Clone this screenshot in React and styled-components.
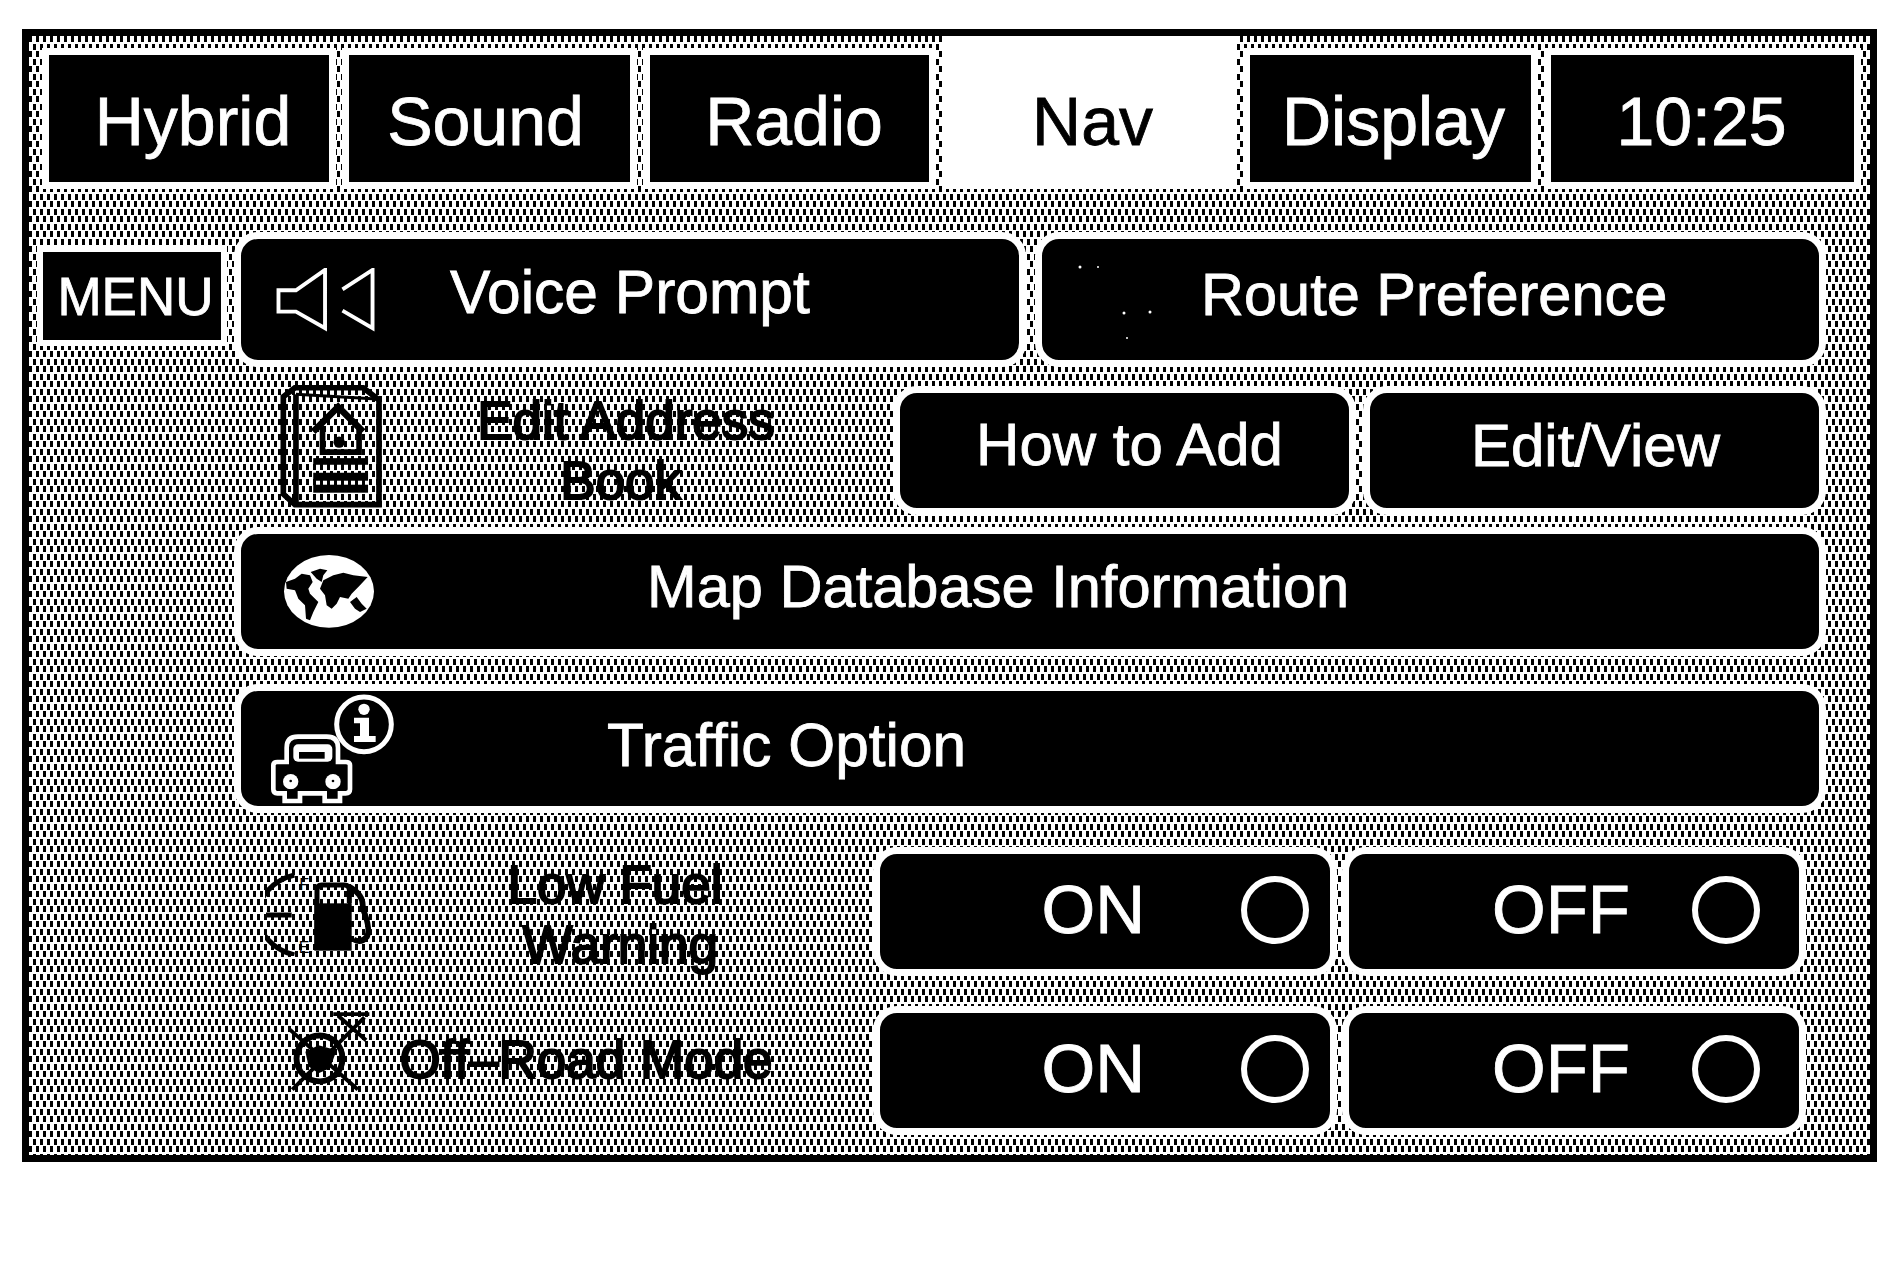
import React from 'react';
import styled, { createGlobalStyle } from 'styled-components';

const GlobalStyle = createGlobalStyle`
  html, body {
    margin: 0;
    padding: 0;
    background: #fff;
  }
  body {
    font-family: 'Liberation Sans', Arial, sans-serif;
  }
`;

const Page = styled.div`
  width: 1893px;
  height: 1272px;
  padding: 29px 0 0 22px;
  box-sizing: border-box;
  overflow: hidden;
`;

// halftone: two staggered layers of short vertical bars
const Frame = styled.div`
  width: 1855px;
  height: 1133px;
  box-sizing: border-box;
  border: 7px solid #000;
  background-color: #fff;
  background-image:
    conic-gradient(from 270deg at 3px 6px, #000 25%, transparent 0),
    conic-gradient(from 270deg at 3px 6px, #000 25%, transparent 0);
  background-size: 7px 15px;
  background-position: 0 0, 4px 8px;
`;

const TabRow = styled.div`
  display: flex;
  gap: 6px;
  padding: 12px 0 0 13px;
`;

const Tab = styled.div`
  width: ${(p) => p.$width}px;
  height: 141px;
  flex: none;
  box-sizing: border-box;
  border: 7px solid #fff;
  background: #000;
  color: #fff;
  font-size: 68px;
  -webkit-text-stroke: 0.8px currentColor;
  display: flex;
  align-items: center;
  justify-content: center;
  padding-top: 4px;
  padding-left: ${(p) => p.$nudge || 0}px;
  padding-right: ${(p) => p.$back || 0}px;
`;

const ActiveTab = styled(Tab)`
  height: 153px;
  margin-top: -12px;
  padding-top: 16px;
  background: #fff;
  color: #000;
`;

const Row = styled.div`
  display: flex;
  align-items: center;
  margin-top: ${(p) => p.$top}px;
  padding-left: ${(p) => p.$left ?? 205}px;
  width: 1797px;
  box-sizing: border-box;
  gap: ${(p) => p.$gap || 0}px;
`;

const MenuButton = styled.div`
  width: 190px;
  height: 100px;
  margin-bottom: 7px;
  padding-left: 7px;
  box-sizing: border-box;
  border: 6px solid #fff;
  background: #000;
  color: #fff;
  font-size: 53px;
  -webkit-text-stroke: 0.8px #fff;
  display: flex;
  align-items: center;
  justify-content: center;
`;

const Button = styled.div`
  width: ${(p) => (p.$width ? `${p.$width}px` : '100%')};
  height: ${(p) => p.$height || 129}px;
  flex: none;
  margin-left: ${(p) => p.$shift || 0}px;
  box-sizing: border-box;
  border: 7px solid #fff;
  border-radius: 24px;
  background: #000;
  color: #fff;
  font-size: ${(p) => p.$size || 60}px;
  -webkit-text-stroke: 0.8px #fff;
  display: flex;
  align-items: center;
  justify-content: ${(p) => (p.$center ? 'center' : 'flex-start')};
  padding-left: ${(p) => p.$pad || 0}px;
  white-space: nowrap;
`;

const ButtonText = styled.span`
  margin-left: ${(p) => p.$before || 0}px;
  padding-bottom: ${(p) => (p.$lift || 0) * 2}px;
`;

const ButtonIcon = styled.svg`
  flex: none;
  display: block;
  margin-right: ${(p) => p.$after || 0}px;
  margin-top: ${(p) => p.$drop || 0}px;
`;

const SettingIcon = styled.svg`
  flex: none;
  display: block;
  margin-left: ${(p) => p.$before}px;
  margin-bottom: ${(p) => p.$raise || 0}px;
  margin-top: ${(p) => p.$drop || 0}px;
`;

const Label = styled.div`
  width: ${(p) => p.$width}px;
  flex: none;
  color: #000;
  font-size: 53px;
  line-height: 60px;
  text-align: center;
  white-space: nowrap;
  padding-top: ${(p) => p.$drop || 0}px;
  padding-bottom: ${(p) => p.$raise || 0}px;
  -webkit-text-stroke: 2px #000;
`;

const ButtonPair = styled.div`
  margin-left: auto;
  margin-right: ${(p) => p.$right || 0}px;
  display: flex;
  gap: ${(p) => p.$gap}px;
`;

const ToggleButton = styled(Button)`
  justify-content: flex-end;
  padding-right: ${(p) => p.$right}px;
  padding-bottom: 4px;
  font-size: 69px;
`;

const Radio = styled.span`
  width: 68px;
  height: 68px;
  box-sizing: border-box;
  border: 6px solid #fff;
  border-radius: 50%;
  margin-left: ${(p) => p.$gap}px;
`;

const SpeakerIcon = () => (
  <ButtonIcon $after={74} width="100" height="64" viewBox="276 259 102 66" fill="none" stroke="#fff" strokeWidth="4">
    <path d="M326 261 L296 282 H278 V304 H296 L326 321 Z" />
    <path d="M344 281 L375 261 V321 L344 303" />
  </ButtonIcon>
);

const RouteSpecks = () => (
  <ButtonIcon $after={45} $drop={6} width="78" height="78" viewBox="1078 265 78 78" fill="#fff">
    <circle cx="1080" cy="268" r="1.5" />
    <circle cx="1098" cy="268" r="1" />
    <circle cx="1124" cy="314" r="1.5" />
    <circle cx="1150" cy="313" r="1.5" />
    <circle cx="1127" cy="339" r="1" />
  </ButtonIcon>
);

const BookIcon = () => (
  <SettingIcon $before={46} $raise={8} width="103" height="123" viewBox="180 40 310 370">
    <g fill="none" stroke="#000" strokeWidth="17">
      <path d="M190 75 L225 48 H430 L478 85 V400 H225 L190 368 Z" />
      <path d="M228 68 V395" />
      <path d="M228 68 L470 82" strokeWidth="9" />
      <path d="M280 180 L355 106 L430 180" strokeWidth="20" />
      <path d="M308 165 V242 H418 V165" />
    </g>
    <circle cx="358" cy="212" r="17" fill="#000" />
    <g fill="#000">
      <rect x="280" y="260" width="165" height="20" />
      <rect x="280" y="304" width="165" height="24" />
      <rect x="280" y="340" width="165" height="24" />
    </g>
  </SettingIcon>
);

const GlobeIcon = () => (
  <ButtonIcon width="90" height="73" viewBox="192 549 270 219">
    <ellipse cx="327" cy="658" rx="135" ry="109" fill="#fff" />
    <g fill="#000">
      <path d="M198 630 L225 620 L245 605 L270 610 L278 630 L265 650 L270 665 L295 690 L280 720 L270 745 L258 740 L255 700 L235 680 L225 655 L200 650 Z" />
      <path d="M272 600 L300 590 L322 595 L310 610 L305 630 L290 620 Z" />
      <path d="M310 625 L340 610 L370 602 L400 610 L443 615 L420 640 L395 665 L385 680 L360 675 L350 695 L335 710 L320 700 L315 670 L300 650 Z" />
      <path d="M390 690 L410 675 L425 695 L440 710 L420 720 L405 710 Z" />
    </g>
  </ButtonIcon>
);

const CarInfoIcon = () => (
  <ButtonIcon width="124" height="110" viewBox="148 964 372 330">
    <circle cx="430" cy="1055" r="82" fill="#000" stroke="#fff" strokeWidth="15" />
    <circle cx="430" cy="1010" r="17" fill="#fff" />
    <path d="M400 1035 H445 V1090 H465 V1108 H400 V1090 H418 V1052 H400 Z" fill="#fff" />
    <path
      d="M158 1245 V1178 Q158 1168 170 1168 H198 V1125 Q198 1092 232 1092 H318 Q352 1092 352 1125 V1168 H375 Q388 1168 388 1178 V1250 Q388 1262 375 1262 H358 V1285 H312 V1262 H238 V1285 H192 V1262 H170 Q158 1262 158 1250 Z"
      fill="#000"
      stroke="#fff"
      strokeWidth="14"
    />
    <rect x="218" y="1115" width="117" height="52" rx="14" fill="#fff" />
    <rect x="235" y="1138" width="77" height="20" fill="#000" />
    <circle cx="210" cy="1227" r="23" fill="#fff" />
    <circle cx="337" cy="1227" r="23" fill="#fff" />
    <circle cx="210" cy="1225" r="4" fill="#000" />
    <circle cx="337" cy="1225" r="4" fill="#000" />
    <rect x="203" y="1250" width="14" height="25" fill="#000" />
    <rect x="330" y="1250" width="14" height="25" fill="#000" />
  </ButtonIcon>
);

const FuelIcon = () => (
  <SettingIcon $before={31} $drop={4} width="106" height="84" viewBox="102 96 318 252">
    <g fill="none" stroke="#000">
      <path d="M190 105 A 150 125 0 0 0 190 345" strokeWidth="15" />
      <path d="M105 225 H182" strokeWidth="15" />
      <path d="M258 330 V150 Q258 135 272 135 H340 Q355 135 355 150 V190" strokeWidth="15" />
      <path d="M355 140 Q400 165 395 205 Q420 265 408 290 Q390 312 368 298" strokeWidth="17" />
    </g>
    <rect x="250" y="190" width="112" height="142" fill="#000" />
    <text x="205" y="150" fontSize="48" fontFamily="Liberation Sans" fill="#000">F</text>
    <text x="203" y="340" fontSize="48" fontFamily="Liberation Sans" fill="#000">E</text>
  </SettingIcon>
);

const OffRoadIcon = () => (
  <SettingIcon $before={54} $raise={38} width="82" height="79" viewBox="172 510 250 238">
    <circle cx="268" cy="650" r="70" fill="none" stroke="#000" strokeWidth="18" />
    <path d="M225 630 L265 610 L320 625 L300 680 L265 695 L235 675 Z" fill="#000" />
    <g stroke="#000" fill="none" strokeWidth="12">
      <path d="M175 560 L385 745" />
      <path d="M185 745 L405 525" />
      <path d="M325 520 L410 595" />
      <path d="M310 515 H420" />
    </g>
  </SettingIcon>
);

const App = () => {
  return (
    <>
      <GlobalStyle />
      <Page>
        <Frame>
          <TabRow>
            <Tab $width={294} $nudge={8}>Hybrid</Tab>
            <Tab $width={295} $back={8}>Sound</Tab>
            <Tab $width={293} $nudge={9}>Radio</Tab>
            <ActiveTab $width={295} $nudge={6}>Nav</ActiveTab>
            <Tab $width={295} $nudge={6}>Display</Tab>
            <Tab $width={317} $back={2}>10:25</Tab>
          </TabRow>

          <Row $top={43} $left={8} $gap={7}>
            <MenuButton>MENU</MenuButton>
            <Button $width={792} $height={135} $pad={35} $size={60.5}>
              <SpeakerIcon />
              <ButtonText $lift={8}>Voice Prompt</ButtonText>
            </Button>
            <Button $width={791} $height={135} $pad={36} $size={59.5} $shift={2}>
              <RouteSpecks />
              <ButtonText $lift={5}>Route Preference</ButtonText>
            </Button>
          </Row>

          <Row $top={18}>
            <BookIcon />
            <Label $width={486}>Edit Address<br />Book{'\u2009'}</Label>
            <ButtonPair $gap={7}>
              <Button $width={463} $center $pad={10}><ButtonText $lift={6}>How to Add</ButtonText></Button>
              <Button $width={463} $center $pad={2}><ButtonText $lift={5}>Edit/View</ButtonText></Button>
            </ButtonPair>
          </Row>

          <Row $top={11}>
            <Button $pad={43} $size={59.6}>
              <GlobeIcon />
              <ButtonText $before={273} $lift={5}>Map Database Information</ButtonText>
            </Button>
          </Row>

          <Row $top={28}>
            <Button $pad={29} $size={60.4}>
              <CarInfoIcon />
              <ButtonText $before={213} $lift={4}>Traffic Option</ButtonText>
            </Button>
          </Row>

          <Row $top={34}>
            <FuelIcon />
            <Label $width={488} $drop={6}>Low Fuel<br />{'\u2009'}Warning</Label>
            <ButtonPair $gap={5} $right={20}>
              <ToggleButton $width={464} $right={21}>ON<Radio $gap={96} /></ToggleButton>
              <ToggleButton $width={464} $right={39}>OFF<Radio $gap={62} /></ToggleButton>
            </ButtonPair>
          </Row>

          <Row $top={30}>
            <OffRoadIcon />
            <Label $width={432} $raise={22}>Off–Road Mode</Label>
            <ButtonPair $gap={5} $right={20}>
              <ToggleButton $width={464} $right={21}>ON<Radio $gap={96} /></ToggleButton>
              <ToggleButton $width={464} $right={39}>OFF<Radio $gap={62} /></ToggleButton>
            </ButtonPair>
          </Row>
        </Frame>
      </Page>
    </>
  );
};

export default App;
